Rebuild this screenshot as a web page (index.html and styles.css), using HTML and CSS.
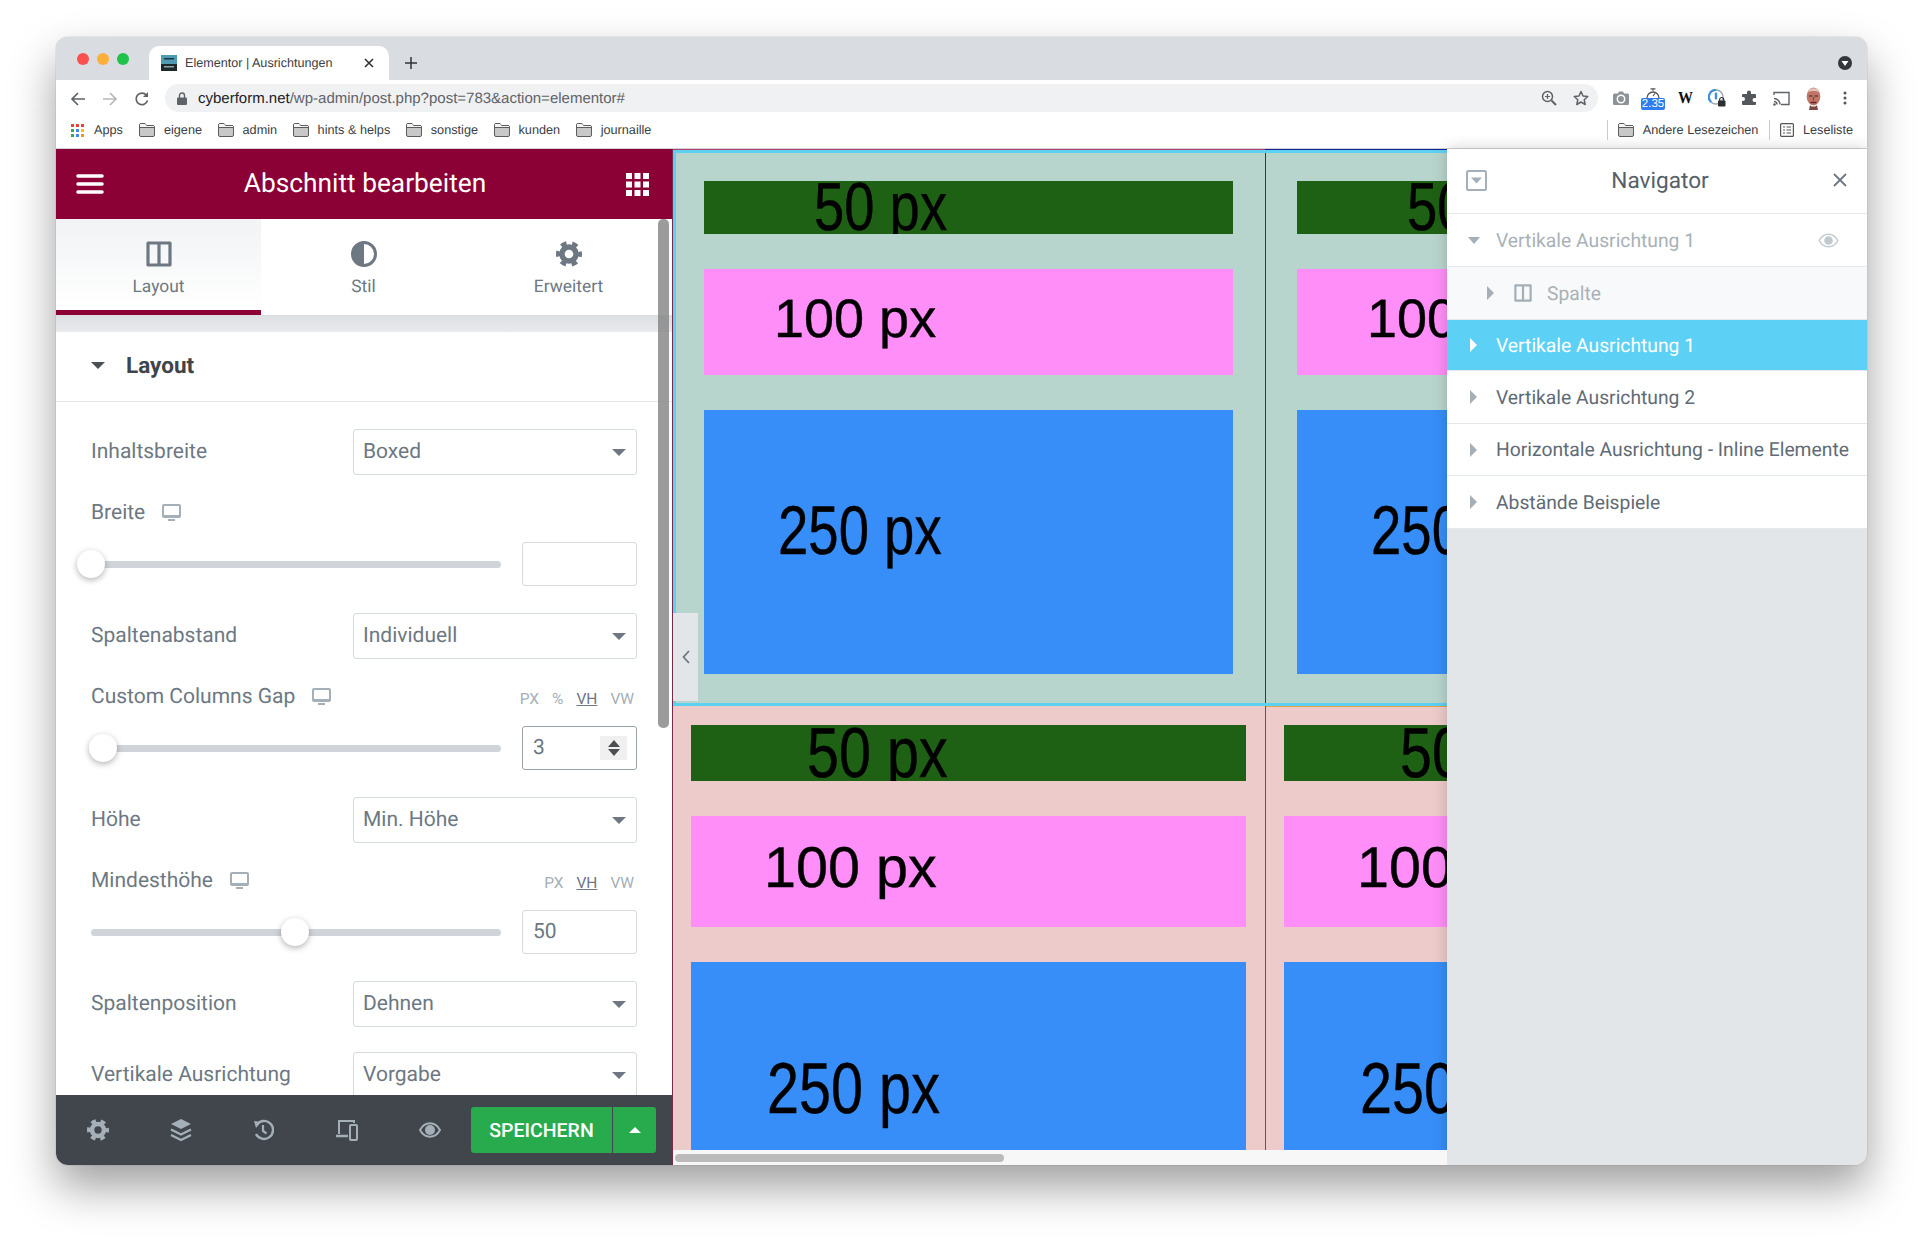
FILE: index.html
```html
<!DOCTYPE html>
<html lang="de">
<head>
    <meta charset="utf-8">
    <title>Elementor | Ausrichtungen</title>
    <link rel="stylesheet" href="styles.css">
</head>
<body>

<svg class="defs" width="0" height="0">
    <symbol id="folder" viewBox="0 0 16 14">
        <path d="M.5 12V2A1.5 1.5 0 0 1 2 .5h4L7.5 2.5H14A1.5 1.5 0 0 1 15.500 4v8A1.5 1.5 0 0 1 14 13.500H2A1.5 1.5 0 0 1 .5 12z" fill="#c8c8c8" stroke="#5c5c5c"/>
        <path d="M1 1h5l1.500 2H15v1.500H1z" fill="#f4f4f4"/>
        <path d="M.5 4.500h15" stroke="#5c5c5c" fill="none"/>
    </symbol>
    <symbol id="desktop" viewBox="0 0 19 18">
        <rect x="0" y="0" width="19" height="14" rx="2" fill="#a4afb7"/>
        <rect x="2" y="2" width="15" height="9" fill="#fff"/>
        <rect x="6" y="15" width="7" height="2" fill="#a4afb7"/>
    </symbol>
    <symbol id="gear" viewBox="0 0 24 24">
        <circle cx="12" cy="12" r="6.5" fill="none" stroke="currentColor" stroke-width="5"/>
        <circle cx="12" cy="12" r="10" fill="none" stroke="currentColor" stroke-width="4" stroke-dasharray="5.2 5.27" stroke-dashoffset="2.6"/>
    </symbol>
    <symbol id="column" viewBox="0 0 26 26">
        <path d="M2 2h22v22H2zM13 2v22" fill="none" stroke="currentColor" stroke-width="3.2" stroke-linejoin="round"/>
    </symbol>
</svg>

<div class="window">

    <!-- browser chrome -->
    <div class="tabbar">
        <div class="lights"><i class="red"></i><i class="yellow"></i><i class="green"></i></div>
        <div class="tab">
            <svg class="favicon" width="16" height="16" viewBox="0 0 16 16"><rect width="16" height="9" fill="#4f9bb3"/><rect y="9" width="16" height="7" fill="#1d2a2c"/><rect x="3" y="3" width="10" height="1.5" fill="#173742"/><rect x="3" y="11" width="10" height="1.5" fill="#8fa6aa"/></svg>
            <span class="tab-title">Elementor | Ausrichtungen</span>
            <svg class="tab-close" width="10" height="10" viewBox="0 0 10 10"><path d="M1 1l8 8M9 1l-8 8" stroke="#333" stroke-width="1.6"/></svg>
        </div>
        <svg class="newtab" width="12" height="12" viewBox="0 0 12 12"><path d="M6 0v12M0 6h12" stroke="#333" stroke-width="1.5"/></svg>
        <svg class="tabmenu" width="14" height="14" viewBox="0 0 14 14"><circle cx="7" cy="7" r="7" fill="#33373b"/><path d="M3.5 5h7L7 10z" fill="#fff"/></svg>
    </div>

    <div class="toolbar">
        <svg class="nav-icon" width="16" height="16" viewBox="0 0 16 16"><path d="M15 8H2M8 2L2 8l6 6" fill="none" stroke="#5f6368" stroke-width="1.7"/></svg>
        <svg class="nav-icon" width="16" height="16" viewBox="0 0 16 16"><path d="M1 8h13M8 2l6 6-6 6" fill="none" stroke="#b5b8bc" stroke-width="1.7"/></svg>
        <svg class="nav-icon" width="16" height="16" viewBox="0 0 16 16"><path d="M13.5 9.5A5.8 5.8 0 1 1 12.3 4" fill="none" stroke="#5f6368" stroke-width="1.7"/><path d="M14 1v5H9z" fill="#5f6368"/></svg>
        <div class="omnibox">
            <svg class="lock" width="10" height="13" viewBox="0 0 10 13"><path d="M2.5 6V3.500a2.5 2.5 0 0 1 5 0V6" fill="none" stroke="#5f6368" stroke-width="1.4"/><rect y="5.5" width="10" height="7.5" rx="1" fill="#5f6368"/></svg>
            <span class="url"><b>cyberform.net</b>/wp-admin/post.php?post=783&amp;action=elementor#</span>
            <svg class="zoom-icon" width="16" height="16" viewBox="0 0 16 16"><circle cx="6.5" cy="6.5" r="5" fill="none" stroke="#5f6368" stroke-width="1.5"/><path d="M10.5 10.5L15 15" stroke="#5f6368" stroke-width="2"/><path d="M4 6.5h5M6.5 4v5" stroke="#5f6368" stroke-width="1.2"/></svg>
            <svg class="star-icon" width="16" height="16" viewBox="0 0 16 16"><path d="M8 1.5l2 4.500 4.800.5-3.600 3.200 1 4.800L8 12l-4.200 2.500 1-4.800L1.200 6.500 6 6z" fill="none" stroke="#5f6368" stroke-width="1.5" stroke-linejoin="round"/></svg>
        </div>
        <div class="ext-icons">
            <svg width="16" height="14" viewBox="0 0 16 14"><path d="M1.5 2.500H5L6 .5h4l1 2h3.500A1.5 1.5 0 0 1 16 4v8.500a1.5 1.5 0 0 1-1.500 1.500h-13A1.500 1.500 0 0 1 0 12.500V4a1.500 1.500 0 0 1 1.500-1.500z" fill="#8d9296"/><circle cx="8" cy="8" r="3.7" fill="none" stroke="#fff" stroke-width="1.5"/></svg>
            <div class="timer">
                <svg width="14" height="10" viewBox="0 0 14 10"><path d="M4.5.8h5M7 .8v2" stroke="#555" stroke-width="1.3"/><path d="M1 10a6 6 0 0 1 12 0" fill="none" stroke="#555" stroke-width="1.3"/><path d="M7 8L9 5.500" stroke="#555" stroke-width="1.2"/></svg>
                <span class="timer-badge">2.35</span>
            </div>
            <span class="wp">W</span>
            <svg width="18" height="18" viewBox="0 0 18 18"><circle cx="8" cy="8" r="7" fill="#fff" stroke="#9aa5b0" stroke-width="1.4"/><path d="M8 1a7 7 0 0 0-5 12" fill="none" stroke="#3d8fe0" stroke-width="2.2"/><rect x="6.8" y="3.5" width="2.4" height="7" rx="1" fill="#3d8fe0"/><rect x="10" y="11.5" width="7.5" height="6" rx="1" fill="#2d2f33"/><path d="M11.7 12v-1.500a2 2 0 0 1 4 0V12" fill="none" stroke="#2d2f33" stroke-width="1.2"/></svg>
            <svg width="16" height="16" viewBox="0 0 16 16"><path d="M6 2.500a2 2 0 0 1 4 0V4h4a1 1 0 0 1 1 1v3h-1.500a2 2 0 0 0 0 4H15v2a1 1 0 0 1-1 1H2a1 1 0 0 1-1-1v-3h1a2 2 0 0 0 0-4H1V5a1 1 0 0 1 1-1h4z" fill="#54585d"/></svg>
            <svg width="17" height="15" viewBox="0 0 17 15"><path d="M1 4V1.500h15v12H8" fill="none" stroke="#5f6368" stroke-width="1.4"/><path d="M1 7.500a6 6 0 0 1 6 6M1 10.500a3 3 0 0 1 3 3" fill="none" stroke="#5f6368" stroke-width="1.4"/><circle cx="1.5" cy="13.500" r="1.3" fill="#5f6368"/></svg>
            <svg width="15" height="23" viewBox="0 0 15 23"><ellipse cx="7.5" cy="9.5" rx="6.8" ry="9" fill="#c07567"/><path d="M2 5C3 0 12 0 13 5 10 3.500 5 3.500 2 5z" fill="#e6c3ba"/><path d="M3 9h3.500M8.500 9H12" stroke="#4a2a28" stroke-width="1.2"/><path d="M7.500 10v3.500" stroke="#8a463e" stroke-width="1.2"/><path d="M4.500 15.500h6" stroke="#5f2623" stroke-width="1.4"/><path d="M4 18c1 2 6 2 7 0l1 5H3z" fill="#7a4a45"/></svg>
            <svg width="4" height="14" viewBox="0 0 4 14"><circle cx="2" cy="2" r="1.5" fill="#555"/><circle cx="2" cy="7" r="1.5" fill="#555"/><circle cx="2" cy="12" r="1.5" fill="#555"/></svg>
        </div>
    </div>

    <div class="bookmarks">
        <svg class="apps" width="13" height="13" viewBox="0 0 13 13">
            <rect width="3" height="3" fill="#ea4335"/><rect x="5" width="3" height="3" fill="#ea4335"/><rect x="10" width="3" height="3" fill="#ea4335"/>
            <rect y="5" width="3" height="3" fill="#34a853"/><rect x="5" y="5" width="3" height="3" fill="#4285f4"/><rect x="10" y="5" width="3" height="3" fill="#fbbc04"/>
            <rect y="10" width="3" height="3" fill="#34a853"/><rect x="5" y="10" width="3" height="3" fill="#4285f4"/><rect x="10" y="10" width="3" height="3" fill="#f29900"/>
        </svg>
        <span class="bm apps-label">Apps</span>
        <a class="bm"><svg width="16" height="14"><use href="#folder"/></svg>eigene</a>
        <a class="bm"><svg width="16" height="14"><use href="#folder"/></svg>admin</a>
        <a class="bm"><svg width="16" height="14"><use href="#folder"/></svg>hints &amp; helps</a>
        <a class="bm"><svg width="16" height="14"><use href="#folder"/></svg>sonstige</a>
        <a class="bm"><svg width="16" height="14"><use href="#folder"/></svg>kunden</a>
        <a class="bm"><svg width="16" height="14"><use href="#folder"/></svg>journaille</a>
        <div class="bm-right">
            <a class="bm sep"><svg width="16" height="14"><use href="#folder"/></svg>Andere Lesezeichen</a>
            <a class="bm sep"><svg width="14" height="14" viewBox="0 0 14 14"><rect x=".6" y=".6" width="12.8" height="12.8" rx="1" fill="none" stroke="#555" stroke-width="1.2"/><path d="M3 4h2M6.5 4H11M3 7h2M6.5 7H11M3 10h2M6.5 10H11" stroke="#555" stroke-width="1.2"/></svg>Leseliste</a>
        </div>
    </div>

    <div class="main">

        <!-- elementor panel -->
        <div class="panel">
            <div class="panel-head">
                <svg width="28" height="20" viewBox="0 0 28 20"><path d="M2 2h24M2 10h24M2 18h24" stroke="#fff" stroke-width="3.6" stroke-linecap="round"/></svg>
                <span class="panel-title">Abschnitt bearbeiten</span>
                <svg width="23" height="23" viewBox="0 0 23 23" fill="#fff"><rect width="6" height="6"/><rect x="8.5" width="6" height="6"/><rect x="17" width="6" height="6"/><rect y="8.5" width="6" height="6"/><rect x="8.5" y="8.5" width="6" height="6"/><rect x="17" y="8.5" width="6" height="6"/><rect y="17" width="6" height="6"/><rect x="8.5" y="17" width="6" height="6"/><rect x="17" y="17" width="6" height="6"/></svg>
            </div>

            <div class="tabs">
                <div class="ptab active">
                    <svg width="26" height="26"><use href="#column"/></svg>
                    <span>Layout</span>
                </div>
                <div class="ptab">
                    <svg width="26" height="26" viewBox="0 0 26 26"><circle cx="13" cy="13" r="11.5" fill="#fff" stroke="currentColor" stroke-width="3"/><path d="M13 1.5a11.5 11.5 0 0 0 0 23z" fill="currentColor"/></svg>
                    <span>Stil</span>
                </div>
                <div class="ptab">
                    <svg width="26" height="26"><use href="#gear"/></svg>
                    <span>Erweitert</span>
                </div>
            </div>
            <div class="tabs-gap"></div>

            <div class="section-head">
                <i class="caret caret-dark"></i>
                <b>Layout</b>
            </div>

            <div class="controls">
                <div class="control">
                    <label>Inhaltsbreite</label>
                    <div class="select">Boxed<i class="caret"></i></div>
                </div>

                <div class="control-slider">
                    <div class="slider-label"><label>Breite</label><svg width="19" height="18"><use href="#desktop"/></svg></div>
                    <div class="slider-row">
                        <div class="track"><i class="thumb" style="left:0px"></i></div>
                        <div class="num"></div>
                    </div>
                </div>

                <div class="control">
                    <label>Spaltenabstand</label>
                    <div class="select">Individuell<i class="caret"></i></div>
                </div>

                <div class="control-slider">
                    <div class="slider-label">
                        <label>Custom Columns Gap</label><svg width="19" height="18"><use href="#desktop"/></svg>
                        <div class="units"><span>PX</span><span>%</span><span class="on">VH</span><span>VW</span></div>
                    </div>
                    <div class="slider-row">
                        <div class="track"><i class="thumb" style="left:12px"></i></div>
                        <div class="num focus">3
                            <div class="spin"><i class="up"></i><i class="down"></i></div>
                        </div>
                    </div>
                </div>

                <div class="control">
                    <label>Höhe</label>
                    <div class="select">Min. Höhe<i class="caret"></i></div>
                </div>

                <div class="control-slider">
                    <div class="slider-label">
                        <label>Mindesthöhe</label><svg width="19" height="18"><use href="#desktop"/></svg>
                        <div class="units"><span>PX</span><span class="on">VH</span><span>VW</span></div>
                    </div>
                    <div class="slider-row">
                        <div class="track"><i class="thumb" style="left:204px"></i></div>
                        <div class="num">50</div>
                    </div>
                </div>

                <div class="control">
                    <label>Spaltenposition</label>
                    <div class="select">Dehnen<i class="caret"></i></div>
                </div>

                <div class="control">
                    <label>Vertikale Ausrichtung</label>
                    <div class="select">Vorgabe<i class="caret"></i></div>
                </div>
            </div>

            <div class="panel-scroll"></div>

            <div class="panel-foot">
                <svg width="22" height="24"><use href="#gear"/></svg>
                <svg width="22" height="24" viewBox="0 0 22 24"><path d="M11 1l10 5-10 5L1 6z" fill="currentColor"/><path d="M1 11.5l10 5 10-5M1 17l10 5 10-5" fill="none" stroke="currentColor" stroke-width="2.4"/></svg>
                <svg width="20" height="22" viewBox="1 0 20 22"><path d="M3.5 6A9 9 0 1 1 3 15" fill="none" stroke="currentColor" stroke-width="2.4"/><path d="M1 2l7 1-5 6z" fill="currentColor"/><path d="M10 6v6l3.5 2.500" fill="none" stroke="currentColor" stroke-width="2.2"/></svg>
                <svg width="22" height="22" viewBox="0 0 22 22"><path d="M3 15V2h15v2" fill="none" stroke="currentColor" stroke-width="2"/><path d="M0 17h12" stroke="currentColor" stroke-width="2.5"/><rect x="14" y="6" width="7" height="15" rx="1" fill="none" stroke="currentColor" stroke-width="2"/></svg>
                <svg width="22" height="16" viewBox="0 0 22 16"><path d="M1 8c5-9 15-9 20 0-5 9-15 9-20 0z" fill="none" stroke="currentColor" stroke-width="2"/><circle cx="11" cy="8" r="5" fill="currentColor"/></svg>
                <div class="save">
                    <span class="save-label">SPEICHERN</span>
                    <span class="save-more"><i></i></span>
                </div>
            </div>
        </div>

        <!-- page preview -->
        <div class="canvas">
            <div class="section section-green">
                <div class="col">
                    <div class="bar bar-s"><span class="t a1">50 px</span></div>
                    <div class="bar bar-m"><span class="t a2">100 px</span></div>
                    <div class="bar bar-l"><span class="t a3">250 px</span></div>
                </div>
                <div class="col">
                    <div class="bar bar-s"><span class="t a1">50 px</span></div>
                    <div class="bar bar-m"><span class="t a2">100 px</span></div>
                    <div class="bar bar-l"><span class="t a3">250 px</span></div>
                </div>
            </div>
            <div class="section section-red">
                <div class="col">
                    <div class="bar bar-s"><span class="t b1">50 px</span></div>
                    <div class="bar bar-m"><span class="t b2">100 px</span></div>
                    <div class="bar bar-l"><span class="t b3">250 px</span></div>
                </div>
                <div class="col">
                    <div class="bar bar-s"><span class="t b1">50 px</span></div>
                    <div class="bar bar-m"><span class="t b2">100 px</span></div>
                    <div class="bar bar-l"><span class="t b3">250 px</span></div>
                </div>
            </div>
            <div class="hscroll"><i></i></div>
            <div class="collapse-handle">
                <svg width="8" height="14" viewBox="0 0 8 14"><path d="M7 1L1.5 7 7 13" fill="none" stroke="#6d7882" stroke-width="1.8"/></svg>
            </div>
        </div>

        <!-- navigator -->
        <div class="navigator">
            <div class="nav-head">
                <svg width="21" height="21" viewBox="0 0 21 21"><rect x="1" y="1" width="19" height="19" rx="1.5" fill="none" stroke="#a4afb7" stroke-width="2"/><path d="M5 7.5h11l-5.500 6z" fill="#a4afb7"/></svg>
                <span class="nav-title">Navigator</span>
                <svg width="14" height="14" viewBox="0 0 14 14"><path d="M1 1l12 12M13 1L1 13" stroke="#6d7882" stroke-width="1.8"/></svg>
            </div>
            <div class="nav-row faded">
                <i class="caret"></i>
                <span>Vertikale Ausrichtung 1</span>
                <svg class="nav-eye" width="21" height="15" viewBox="0 0 22 16"><path d="M1 8c5-9 15-9 20 0-5 9-15 9-20 0z" fill="none" stroke="#c2c9cf" stroke-width="1.6"/><circle cx="11" cy="8" r="4.6" fill="#c2c9cf"/></svg>
            </div>
            <div class="nav-row child">
                <i class="tri"></i>
                <svg width="18" height="18"><use href="#column"/></svg>
                <span>Spalte</span>
            </div>
            <div class="nav-row selected"><i class="tri"></i><span>Vertikale Ausrichtung 1</span></div>
            <div class="nav-row"><i class="tri"></i><span>Vertikale Ausrichtung 2</span></div>
            <div class="nav-row r52"><i class="tri"></i><span>Horizontale Ausrichtung - Inline Elemente</span></div>
            <div class="nav-row"><i class="tri"></i><span>Abstände Beispiele</span></div>
        </div>
    </div>
</div>

</body>
</html>
```

FILE: styles.css
```css
html, body {
    margin: 0;
    height: 100%;
    background: #fff;
    overflow: hidden;
}
body {
    font-family: Roboto, sans-serif;
    color: #6d7882;
    text-rendering: geometricPrecision;
}
.defs {
    position: absolute;
}
i {
    display: block;
}

.window {
    position: relative;
    width: 1811px;
    height: 1128px;
    margin: 37px 0 0 56px;
    border-radius: 12px;
    overflow: hidden;
    display: flex;
    flex-direction: column;
    box-shadow: 0 22px 45px rgba(0,0,0,0.38), 0 0 1px rgba(0,0,0,0.5);
}

/* browser chrome */
.tabbar {
    height: 43px;
    background: #d9dce1;
    display: flex;
    align-items: flex-end;
    flex-shrink: 0;
}
.lights {
    display: flex;
    gap: 8px;
    margin: 0 0 15px 21px;
}
.lights i {
    width: 12px;
    height: 12px;
    border-radius: 50%;
}
.lights .red { background: #fc4f4f; }
.lights .yellow { background: #fdaf3a; }
.lights .green { background: #1fc24a; }
.tab {
    width: 240px;
    height: 34px;
    margin-left: 20px;
    background: #fff;
    border-radius: 10px 10px 0 0;
    display: flex;
    align-items: center;
    padding-left: 12px;
    box-sizing: border-box;
}
.tab-title {
    margin-left: 8px;
    font: 12.6px "Liberation Sans", sans-serif;
    color: #3c4043;
    width: 179px;
    white-space: nowrap;
}
.newtab {
    margin: 0 0 11px 16px;
}
.tabmenu {
    margin: 0 15px 10px auto;
}

.toolbar {
    height: 38px;
    background: #fff;
    display: flex;
    align-items: center;
    flex-shrink: 0;
    padding-left: 14px;
}
.nav-icon {
    margin-right: 16px;
}
.omnibox {
    width: 1433px;
    height: 28px;
    margin-left: -1px;
    margin-top: -2px;
    background: #f0f1f3;
    border-radius: 14px;
    display: flex;
    align-items: center;
    padding-left: 12px;
    box-sizing: border-box;
}
.url {
    margin-left: 11px;
    font: 15px "Liberation Sans", sans-serif;
    color: #5f6368;
    white-space: nowrap;
}
.url b {
    font-weight: 400;
    color: #202124;
}
.zoom-icon {
    margin-left: auto;
}
.star-icon {
    margin: 0 9px 0 16px;
}
.ext-icons {
    display: grid;
    grid-template-columns: repeat(8, 32px);
    justify-items: center;
    align-items: center;
    margin: -2px 0 0 7px;
    height: 28px;
}
.timer {
    width: 24px;
    display: flex;
    flex-direction: column;
    align-items: center;
    margin-top: 2px;
}
.timer-badge {
    width: 24px;
    text-align: center;
    background: #2f7bf0;
    color: #fff;
    font: 11.5px "Liberation Sans", sans-serif;
    line-height: 12px;
    border-radius: 2px;
}
.wp {
    font: bold 17px "Liberation Serif", serif;
    color: #111;
    transform: scaleX(0.88);
}

.bookmarks {
    height: 30px;
    padding: 0 0 6px 15px;
    box-sizing: border-box;
    height: 31px;
    background: #fff;
    display: flex;
    align-items: center;
    border-bottom: 1px solid #d2d4d7;
    flex-shrink: 0;
    font: 12.7px "Liberation Sans", sans-serif;
    color: #3c4043;
}
.bm {
    display: flex;
    align-items: center;
    gap: 8.5px;
    margin-right: 16px;
    white-space: nowrap;
}
.apps-label {
    margin-left: 10px;
    margin-right: 16.5px;
}
.bm-right {
    margin-left: auto;
    display: flex;
    align-items: center;
    margin-right: 3px;
}
.bm.sep {
    border-left: 1px solid #c9cbce;
    height: 20px;
    padding-left: 10px;
    margin-right: 11px;
}

/* layout of the editor */
.main {
    flex: 1;
    display: flex;
    min-height: 0;
}

/* elementor panel */
.panel {
    width: 616px;
    flex-shrink: 0;
    display: flex;
    flex-direction: column;
    position: relative;
    background: #fff;
    overflow: hidden;
}
.panel-head {
    height: 70px;
    flex-shrink: 0;
    background: #8b0035;
    display: flex;
    align-items: center;
    justify-content: space-between;
    padding: 0 23px 0 20px;
}
.panel-title {
    color: #fff;
    font-size: 26.3px;
}
.tabs {
    height: 96px;
    flex-shrink: 0;
    display: flex;
    padding-right: 1px;
    box-sizing: border-box;
}
.ptab {
    width: 205px;
    display: flex;
    flex-direction: column;
    align-items: center;
    padding-top: 22px;
    box-sizing: border-box;
    font-size: 17.4px;
    color: #6d7882;
}
.ptab span {
    margin-top: 10px;
}
.ptab.active {
    background: linear-gradient(#f1f3f5, #fff);
    border-bottom: 5px solid #8b0035;
}
.tabs-gap {
    height: 17px;
    flex-shrink: 0;
    background: linear-gradient(#dcdfe2, #e8eaec);
}
.section-head {
    height: 70px;
    box-sizing: border-box;
    padding: 0 0 2px 35px;
    flex-shrink: 0;
    border-bottom: 1px solid #e6e9ec;
    display: flex;
    align-items: center;
    gap: 21px;
    color: #3f444b;
    font-size: 22.5px;
}
.caret {
    width: 0;
    height: 0;
    border-left: 7px solid transparent;
    border-right: 7px solid transparent;
    border-top: 7px solid #6d7882;
}
.caret-dark {
    border-top-color: #495157;
}
.controls {
    flex: 1;
    min-height: 0;
    padding: 27px 35px 0;
    overflow: hidden;
    font-size: 21px;
}
.control {
    display: flex;
    align-items: center;
    height: 46px;
    margin-bottom: 25px;
}
.control + .control {
    margin-top: 3px;
}
.control label {
    flex: 1;
}
.select {
    width: 284px;
    height: 46px;
    border: 1px solid #d5dadf;
    border-radius: 3px;
    box-sizing: border-box;
    padding: 0 10px 0 9px;
    display: flex;
    align-items: center;
    justify-content: space-between;
}
.control-slider {
    margin-bottom: 27px;
}
.slider-label {
    display: flex;
    align-items: center;
    height: 26px;
    gap: 17px;
    margin-bottom: 16px;
}
.units {
    margin-left: auto;
    margin-top: 3px;
    display: flex;
    gap: 13px;
    font-size: 15.5px;
    color: #a4afb7;
    padding-right: 3px;
}
.units .on {
    color: #6d7882;
    text-decoration: underline;
}
.slider-row {
    display: flex;
    align-items: center;
    justify-content: space-between;
}
.track {
    width: 410px;
    height: 7px;
    background: #d0d4d9;
    border-radius: 4px;
    position: relative;
}
.thumb {
    position: absolute;
    top: -10.5px;
    margin-left: -14px;
    width: 28px;
    height: 28px;
    border-radius: 50%;
    background: #fff;
    box-shadow: 0 2px 6px rgba(0,0,0,0.3);
}
.num {
    width: 115px;
    height: 44px;
    border: 1px solid #d5dadf;
    border-radius: 3px;
    box-sizing: border-box;
    padding-left: 10px;
    display: flex;
    align-items: center;
    position: relative;
}
.num.focus {
    border-color: #9aa3aa;
}
.spin {
    position: absolute;
    right: 9px;
    top: 9px;
    width: 27px;
    height: 24px;
    background: #f0f0f0;
    display: flex;
    flex-direction: column;
    align-items: center;
    justify-content: center;
    gap: 2px;
}
.spin .up, .spin .down {
    width: 0;
    height: 0;
    border-left: 6px solid transparent;
    border-right: 6px solid transparent;
}
.spin .up { border-bottom: 7px solid #4a4f54; }
.spin .down { border-top: 7px solid #4a4f54; }

.panel-scroll {
    position: absolute;
    left: 602px;
    top: 70px;
    width: 11px;
    height: 509px;
    background: rgba(130,130,130,0.8);
    border-radius: 5px;
}
.panel-foot {
    height: 70px;
    flex-shrink: 0;
    background: #41464c;
    color: #a4afb7;
    display: grid;
    grid-template-columns: repeat(5, 83px) 1fr;
    justify-items: center;
    align-items: center;
}
.save {
    justify-self: start;
    width: 185px;
    height: 46px;
    display: flex;
    color: #fff;
    font-size: 19.5px;
    font-weight: 500;
}
.save-label {
    width: 141px;
    background: #27ab4c;
    border-radius: 3px 0 0 3px;
    display: flex;
    align-items: center;
    justify-content: center;
}
.save-more {
    flex: 1;
    margin-left: 1px;
    background: #27ab4c;
    border-radius: 0 3px 3px 0;
    display: flex;
    align-items: center;
    justify-content: center;
}
.save-more i {
    width: 0;
    height: 0;
    border-left: 6px solid transparent;
    border-right: 6px solid transparent;
    border-bottom: 6px solid #fff;
}

/* page preview */
.canvas {
    flex: 1;
    min-width: 0;
    position: relative;
    overflow: hidden;
    border-left: 1px solid #7a2a48;
    display: flex;
    flex-direction: column;
}
.section {
    display: flex;
    flex-shrink: 0;
    position: relative;
}
.section-green {
    height: 557px;
    background: #b8d5cd;
}
.section-green::after {
    content: "";
    position: absolute;
    left: 0;
    top: 0;
    width: 1000px;
    height: 100%;
    box-sizing: border-box;
    border: solid #5dd1f2;
    border-width: 4px 3px 3px 3px;
}
.section-green::before {
    content: "";
    position: absolute;
    left: 0;
    top: 0;
    width: 1000px;
    height: 1px;
    z-index: 1;
    background: linear-gradient(90deg, #b0406a 592px, #10209a 592px);
}
.section-red {
    height: 444px;
    background: #eecbcb;
}
.col {
    flex-shrink: 0;
    border-right: 1px solid #6a1a55;
    display: flex;
    flex-direction: column;
    gap: 35px;
}
.section-green .col {
    padding: 32px 32px 0 31px;
    width: 529px;
}
.section-red .col {
    padding: 19px 19px 0 18px;
    width: 555px;
    border-right-color: #8a4a20;
}
.section-red .col + .col {
    box-shadow: inset 0 1px 0 #e8a24a;
}
.bar {
    overflow: hidden;
    flex-shrink: 0;
}
.bar-s { background: #1f6114; }
.bar-m { background: #ff8ef8; }
.bar-l { background: #378ef8; }
.section-green .bar-s { height: 53px; }
.section-green .bar-m { height: 106px; }
.section-green .bar-l { height: 264px; }
.section-red .bar-s { height: 56px; }
.section-red .bar-m { height: 111px; }
.section-red .bar-l { height: 278px; }

.t {
    display: block;
    width: max-content;
    font-family: "Liberation Sans", Arial, sans-serif;
    line-height: 1;
    color: #000;
    -webkit-text-stroke: 0.4px #000;
    transform-origin: left top;
}
.a1 { font-size: 68px; margin: -8.5px 0 0 110px; transform: scaleX(0.8); }
.a2 { font-size: 54px; margin: 23px 0 0 70px; }
.a3 { font-size: 69px; margin: 86px 0 0 73.5px; transform: scaleX(0.79); }
.b1 { font-size: 71px; margin: -7px 0 0 116px; transform: scaleX(0.81); }
.b2 { font-size: 57.5px; margin: 23.5px 0 0 73px; }
.b3 { font-size: 72px; margin: 91px 0 0 76px; transform: scaleX(0.8); }

.hscroll {
    position: absolute;
    left: 0;
    right: 0;
    bottom: 0;
    height: 15px;
    z-index: 2;
    background: #f7f7f7;
}
.hscroll i {
    margin: 4px 0 0 2px;
    width: 329px;
    height: 8px;
    background: #bbb;
    border-radius: 4px;
}
.collapse-handle {
    position: absolute;
    left: 0;
    top: 464px;
    width: 25px;
    height: 88px;
    z-index: 2;
    background: #e3e6e9;
    display: flex;
    align-items: center;
    justify-content: center;
}

/* navigator */
.navigator {
    width: 420px;
    flex-shrink: 0;
    background: #e3e6e9;
    box-shadow: 0 0 14px rgba(0,0,0,0.2);
    position: relative;
    font-size: 19.3px;
    color: #5f6b75;
}
.nav-head {
    height: 65px;
    box-sizing: border-box;
    padding: 0 20px 2px 19px;
    background: #fff;
    border-bottom: 1px solid #e6e9ec;
    display: flex;
    align-items: center;
    justify-content: space-between;
}
.nav-title {
    font-size: 22.6px;
    color: #556068;
}
.nav-row {
    height: 53px;
    box-sizing: border-box;
    background: #fff;
    border-bottom: 1px solid #e6e9ec;
    display: flex;
    align-items: center;
    padding-left: 21px;
    position: relative;
}
.nav-row.r52 {
    height: 52px;
}
.nav-row > span {
    margin-left: 19px;
    white-space: nowrap;
}
.nav-row .caret {
    border-top-color: #a4afb7;
    border-left-width: 6px;
    border-right-width: 6px;
}
.tri {
    width: 0;
    height: 0;
    border-top: 7px solid transparent;
    border-bottom: 7px solid transparent;
    border-left: 7px solid #a4afb7;
    margin-left: 2px;
}
.nav-row.faded {
    color: #a9b1b8;
}
.nav-row.faded > span {
    margin-left: 16px;
}
.nav-eye {
    margin-left: auto;
    margin-right: 28px;
}
.nav-row.child {
    background: #f8f9fa;
    padding-left: 38px;
    color: #a9b1b8;
}
.nav-row.child svg {
    margin-left: 20px;
    color: #a4afb7;
}
.nav-row.child > span {
    margin-left: 15px;
}
.nav-row.selected {
    background: #5dd1f5;
    color: #fff;
    height: 51px;
}
.nav-row.selected .tri {
    border-left-color: #fff;
}
```
